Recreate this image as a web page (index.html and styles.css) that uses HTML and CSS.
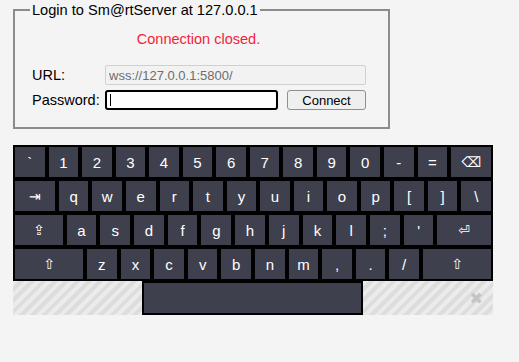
FILE: index.html
```html
<!DOCTYPE html>
<html lang="en">
<head>
    <meta charset="UTF-8">
    <meta name="viewport" content="width=device-width, initial-scale=1.0">
    <title>Sm@rtServer Login</title>
    <link rel="stylesheet" href="styles.css">
</head>
<body>
    <div class="page">
        <fieldset class="login">
            <legend>Login to Sm@rtServer at 127.0.0.1</legend>
            <div class="status">Connection closed.</div>
            <div class="row">
                <label for="url">URL:</label>
                <input type="text" id="url" class="url" value="wss://127.0.0.1:5800/" disabled>
            </div>
            <div class="row">
                <label for="password">Password:</label>
                <span class="pass-wrap"><input type="password" id="password" class="pass"></span>
                <button class="connect">Connect</button>
            </div>
        </fieldset>

        <div class="keyboard">
            <div class="keys">
                <div class="krow">
                    <div class="key">`</div>
                    <div class="key">1</div>
                    <div class="key">2</div>
                    <div class="key">3</div>
                    <div class="key">4</div>
                    <div class="key">5</div>
                    <div class="key">6</div>
                    <div class="key">7</div>
                    <div class="key">8</div>
                    <div class="key">9</div>
                    <div class="key">0</div>
                    <div class="key">-</div>
                    <div class="key">=</div>
                    <div class="key wide sym">&#x232B;</div>
                </div>
                <div class="krow">
                    <div class="key wide sym">&#x21E5;</div>
                    <div class="key">q</div>
                    <div class="key">w</div>
                    <div class="key">e</div>
                    <div class="key">r</div>
                    <div class="key">t</div>
                    <div class="key">y</div>
                    <div class="key">u</div>
                    <div class="key">i</div>
                    <div class="key">o</div>
                    <div class="key">p</div>
                    <div class="key">[</div>
                    <div class="key">]</div>
                    <div class="key">\</div>
                </div>
                <div class="krow">
                    <div class="key caps sym">&#x21EA;</div>
                    <div class="key">a</div>
                    <div class="key">s</div>
                    <div class="key">d</div>
                    <div class="key">f</div>
                    <div class="key">g</div>
                    <div class="key">h</div>
                    <div class="key">j</div>
                    <div class="key">k</div>
                    <div class="key">l</div>
                    <div class="key">;</div>
                    <div class="key">'</div>
                    <div class="key enter sym">&#x23CE;</div>
                </div>
                <div class="krow">
                    <div class="key shift sym">&#x21E7;</div>
                    <div class="key">z</div>
                    <div class="key">x</div>
                    <div class="key">c</div>
                    <div class="key">v</div>
                    <div class="key">b</div>
                    <div class="key">n</div>
                    <div class="key">m</div>
                    <div class="key">,</div>
                    <div class="key">.</div>
                    <div class="key">/</div>
                    <div class="key shift sym">&#x21E7;</div>
                </div>
            </div>
            <div class="bottom">
                <div class="hatch left"></div>
                <div class="space-wrap"><div class="key space"></div></div>
                <div class="hatch right"><span class="close">&#x2716;</span></div>
            </div>
        </div>
    </div>
</body>
</html>
```

FILE: styles.css
```css
body {
    margin: 0;
    background-color: #f4f4f4;
    font-family: "Liberation Sans", Arial, sans-serif;
}
.page {
    padding: 2px 13px 0 13px;
}
.login {
    width: 377px;
    box-sizing: border-box;
    margin: 0;
    padding: 0 21px 17px 15px;
    border: 2px solid #8c8c8c;
}
.login legend {
    padding: 0 2px;
    font-size: 14.6px;
    color: #000;
}
.status {
    margin-top: 13px;
    text-align: center;
    color: #f41e3c;
    font-size: 14.5px;
}
.row {
    display: flex;
    align-items: center;
    height: 20px;
    padding-left: 2px;
}
.row + .row {
    margin-top: 5px;
}
.status + .row {
    margin-top: 18px;
}
label {
    width: 73px;
    font-size: 14.5px;
    color: #000;
}
input {
    box-sizing: border-box;
    height: 20px;
    margin: 0;
    font-family: "Liberation Sans", Arial, sans-serif;
    font-size: 13px;
}
.url {
    width: 261px;
    padding: 0 3px;
    background-color: #f2f2f2;
    border: 1px solid #d0d0d0;
    border-radius: 2px;
    color: #6d6d6d;
}
.pass-wrap {
    position: relative;
    display: block;
}
.pass-wrap::after {
    content: "";
    position: absolute;
    left: 5px;
    top: 4px;
    width: 1px;
    height: 12px;
    background-color: #000;
}
.pass {
    display: block;
    width: 173px;
    padding: 0 4px;
    background-color: #fff;
    border: 2px solid #000;
    border-radius: 3px;
    outline: none;
}
.connect {
    box-sizing: border-box;
    width: 79px;
    height: 20px;
    margin-left: 9px;
    padding: 0;
    font-family: "Liberation Sans", Arial, sans-serif;
    font-size: 13px;
    color: #000;
    background-color: #efefef;
    border: 1px solid #8f8f8f;
    border-radius: 3px;
}
.keyboard {
    width: 480px;
    margin-top: 16px;
}
.keys {
    display: flex;
    flex-direction: column;
    gap: 4px;
    padding: 2px;
    background-color: #000;
}
.krow {
    display: flex;
    gap: 4px;
    height: 30px;
}
.key {
    flex: 1 1 0;
    display: flex;
    align-items: center;
    justify-content: center;
    background-color: #3f404e;
    color: #fff;
    font-size: 15px;
}
.sym {
    font-family: "DejaVu Sans", sans-serif;
    font-size: 14px;
}
.wide {
    flex-grow: 1.35;
}
.caps {
    flex-grow: 1.6;
}
.enter {
    flex-grow: 1.8;
}
.shift {
    flex-grow: 2.3;
}
.bottom {
    display: flex;
    height: 34px;
}
.hatch {
    background: repeating-linear-gradient(135deg, #ebebeb 0 4px, #dddddd 4px 8px);
}
.hatch.left {
    width: 129px;
}
.hatch.right {
    flex: 1;
    display: flex;
    align-items: center;
    justify-content: flex-end;
    padding-right: 10px;
}
.close {
    color: #c4c4c4;
    font-family: "DejaVu Sans", sans-serif;
    font-size: 16px;
}
.space-wrap {
    display: flex;
    width: 221px;
    box-sizing: border-box;
    padding: 2px;
    background-color: #000;
}
```
